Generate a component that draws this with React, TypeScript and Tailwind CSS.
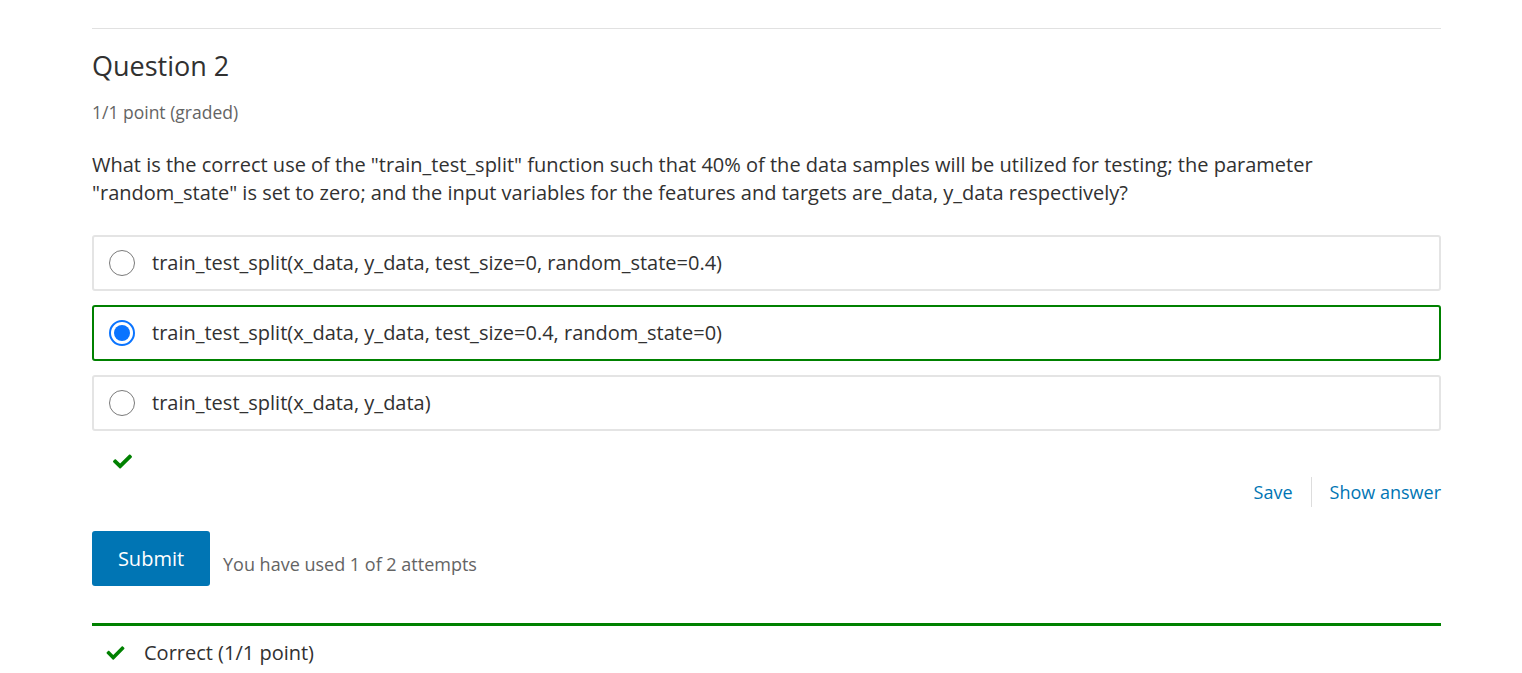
function Check({ className }: { className?: string }) {
  return (
    <svg viewBox="0 0 512 512" className={className} fill="currentColor">
      <path d="M173.9 439.4L7.5 273c-10-10-10-26.2 0-36.2l36.2-36.2c10-10 26.2-10 36.2 0L192 312.7 432.1 72.6c10-10 26.2-10 36.2 0l36.2 36.2c10 10 10 26.2 0 36.2L210.1 439.4c-10 10-26.2 10-36.2 0z" />
    </svg>
  );
}

const options = [
  'train_test_split(x_data, y_data, test_size=0, random_state=0.4)',
  'train_test_split(x_data, y_data, test_size=0.4, random_state=0)',
  'train_test_split(x_data, y_data)',
];

export default function App() {
  const selected = 1;
  return (
    <div className="min-h-screen bg-white" style={{ fontFamily: '"Open Sans", sans-serif' }}>
      <div className="ml-[92px] w-[1349px] pt-[28px]">
        <div className="border-t border-[#e1e1e1]" />
        <h2 className="mt-[20px] text-[27px] leading-[34px] text-[#313131]">Question 2</h2>
        <div className="mt-[17px] text-[17.5px] leading-[24px] text-[#646464]">1/1 point (graded)</div>
        <p className="mt-[27px] text-[20px] leading-[28px] text-[#313131]">
          What is the correct use of the "train_test_split" function such that 40% of the data samples will be utilized for testing; the parameter "random_state" is set to zero; and the input variables for the features and targets are_data, y_data respectively?
        </p>
        <div className="mt-[28px] flex flex-col gap-[14px]">
          {options.map((o, i) => (
            <label
              key={o}
              className={
                i === selected
                  ? 'flex h-[56px] items-center rounded-[3px] border-2 border-[#008100] pl-[15px] text-[20px] text-[#313131]'
                  : 'flex h-[56px] items-center rounded-[3px] border-2 border-[#e4e4e4] pl-[15px] text-[20px] text-[#313131]'
              }
            >
              {i === selected ? (
                <span className="flex h-[26px] w-[26px] items-center justify-center rounded-full border-2 border-[#0a74ff] bg-white">
                  <span className="h-[16px] w-[16px] rounded-full bg-[#0a74ff]" />
                </span>
              ) : (
                <span className="h-[26px] w-[26px] rounded-full border-[1.5px] border-[#7a7a7a] bg-white" />
              )}
              <span className="ml-[17px]">{o}</span>
            </label>
          ))}
        </div>
        <div className="mt-[21px] pl-[19px] text-[#008100]">
          <Check className="h-[19px] w-[23px]" />
        </div>
        <div className="mt-[6px] flex justify-end text-[18px] text-[#0075b4]">
          <span className="pr-[18px] leading-[30px]">Save</span>
          <span className="border-l border-[#ddd] pl-[18px] leading-[30px]">Show answer</span>
        </div>
        <div className="mt-[24px] flex items-center">
          <button className="h-[55px] w-[118px] rounded-[3px] bg-[#0075b4] text-[20px] text-white">Submit</button>
          <span className="ml-[13px] mt-[12px] text-[18px] text-[#646464]">You have used 1 of 2 attempts</span>
        </div>
        <div className="mt-[37px] border-t-[3px] border-[#008100]" />
        <div className="mt-[12px] flex items-center pl-[14px] text-[20px] text-[#313131]">
          <Check className="h-[18px] w-[19px] text-[#008100]" />
          <span className="ml-[19px]">Correct (1/1 point)</span>
        </div>
      </div>
    </div>
  );
}
